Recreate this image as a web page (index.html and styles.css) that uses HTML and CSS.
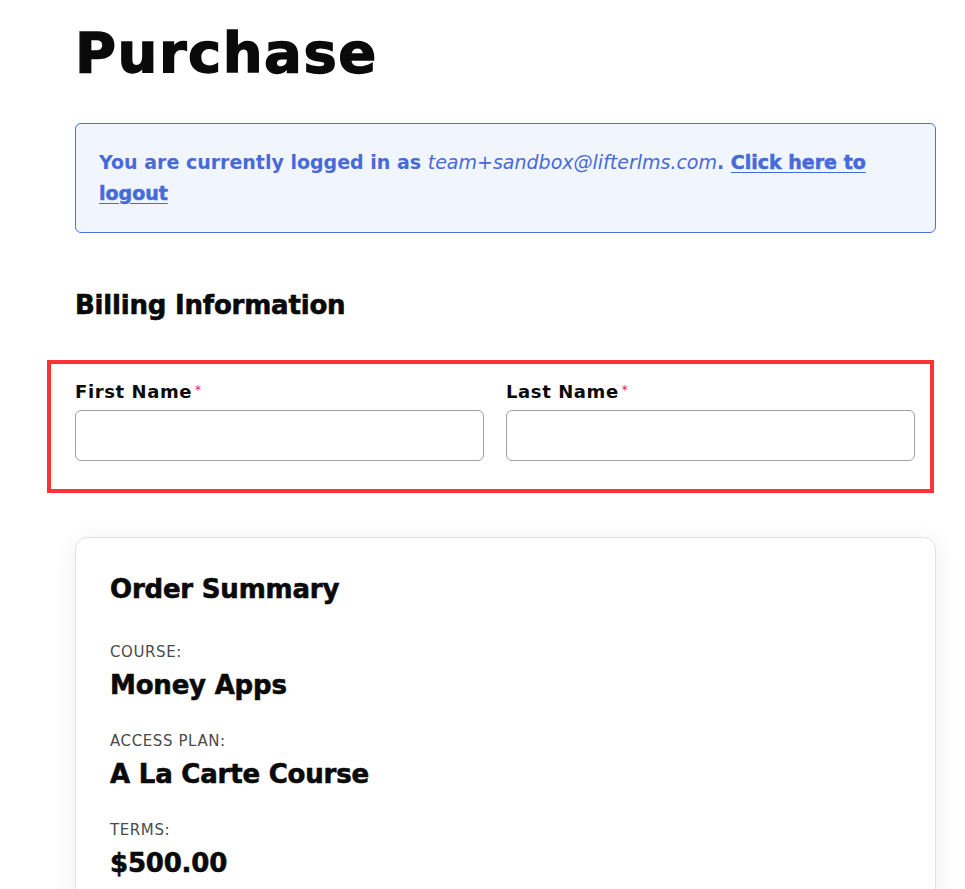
FILE: index.html
```html
<!DOCTYPE html>
<html lang="en">
<head>
<meta charset="utf-8">
<title>Purchase</title>
<link rel="stylesheet" href="styles.css">
</head>
<body>
<main class="page">
  <h1 class="page-title">Purchase</h1>

  <div class="notice">
    <p class="notice-text">You are currently logged in as <em class="notice-email">team+sandbox@lifterlms.com</em>. <a class="notice-link" href="#">Click here to logout</a></p>
  </div>

  <h2 class="section-title">Billing Information</h2>

  <div class="field-row">
    <div class="field">
      <label class="field-label" for="first-name">First Name<span class="req">*</span></label>
      <input class="field-input" id="first-name" type="text">
    </div>
    <div class="field">
      <label class="field-label" for="last-name">Last Name<span class="req">*</span></label>
      <input class="field-input" id="last-name" type="text">
    </div>
    <div class="highlight"></div>
  </div>

  <section class="summary">
    <h2 class="summary-title">Order Summary</h2>
    <div class="summary-item">
      <div class="summary-label">Course:</div>
      <div class="summary-value">Money Apps</div>
    </div>
    <div class="summary-item">
      <div class="summary-label">Access Plan:</div>
      <div class="summary-value">A La Carte Course</div>
    </div>
    <div class="summary-item">
      <div class="summary-label">Terms:</div>
      <div class="summary-value">$500.00</div>
    </div>
  </section>
</main>
</body>
</html>
```

FILE: styles.css
```css
* { box-sizing: border-box; }

html, body {
  margin: 0;
  padding: 0;
  background: #ffffff;
}

body {
  font-family: "DejaVu Sans", "Liberation Sans", sans-serif;
  color: #111111;
  overflow: hidden;
}

.page {
  width: 861px;
  margin-left: 75px;
  padding-top: 14px;
}

.page-title {
  margin: 0;
  font-size: 56px;
  line-height: 78px;
  font-weight: 700;
  letter-spacing: 1.5px;
  color: #0a0a0a;
  -webkit-text-stroke: 1.4px #0a0a0a;
}

.notice {
  margin-top: 31px;
  border: 1px solid #4b72de;
  border-radius: 6px;
  background: #f1f5fd;
  padding: 23px 40px 23px 23px;
}

.notice-text {
  margin: 0;
  font-size: 19px;
  line-height: 31px;
  font-weight: 700;
  color: #466bd9;
}

.notice-email {
  font-style: italic;
  font-weight: 400;
}

.notice-link {
  color: #466bd9;
  font-weight: 700;
  text-decoration: underline;
  text-underline-offset: 3px;
  -webkit-text-stroke: 0.5px #466bd9;
}

.section-title {
  margin: 56px 0 0;
  font-size: 26px;
  line-height: 32px;
  font-weight: 700;
  color: #0a0a0a;
  letter-spacing: -0.2px;
  -webkit-text-stroke: 0.6px #0a0a0a;
}

.field-row {
  position: relative;
  margin-top: 58px;
  display: grid;
  grid-template-columns: 1fr 1fr;
  gap: 22px;
  width: 840px;
}

.field {
  display: flex;
  flex-direction: column;
}

.field-label {
  font-size: 18px;
  line-height: 26px;
  font-weight: 700;
  color: #0a0a0a;
  letter-spacing: 0.6px;
  margin-bottom: 5px;
}

.req {
  color: #e0245e;
  font-size: 12px;
  font-weight: 400;
  vertical-align: top;
  margin-left: 3px;
  position: relative;
  top: -2px;
}

.field-input {
  height: 51px;
  border: 1px solid #a0a0a0;
  border-radius: 6px;
  background: #ffffff;
  font: inherit;
  padding: 0 14px;
}

.highlight {
  position: absolute;
  left: -28px;
  right: -19px;
  top: -19px;
  bottom: -32px;
  border: 4px solid #ff3333;
  pointer-events: none;
}

.summary {
  margin-top: 76px;
  border: 1px solid #e2e2e2;
  border-radius: 12px;
  background: #ffffff;
  box-shadow: 0 4px 24px rgba(0, 0, 0, 0.07);
  padding: 35px 34px 40px;
}

.summary-title {
  margin: 0;
  font-size: 26px;
  line-height: 32px;
  font-weight: 700;
  color: #0a0a0a;
  letter-spacing: -0.2px;
  -webkit-text-stroke: 0.6px #0a0a0a;
}

.summary-item {
  margin-top: 37px;
}

.summary-item + .summary-item {
  margin-top: 30px;
}

.summary-label {
  font-size: 15px;
  line-height: 20px;
  font-weight: 400;
  text-transform: uppercase;
  color: #4a4a4a;
  letter-spacing: 0.6px;
}

.summary-value {
  margin-top: 7px;
  font-size: 26px;
  line-height: 32px;
  font-weight: 700;
  color: #0a0a0a;
  letter-spacing: -0.2px;
  -webkit-text-stroke: 0.6px #0a0a0a;
}
```
